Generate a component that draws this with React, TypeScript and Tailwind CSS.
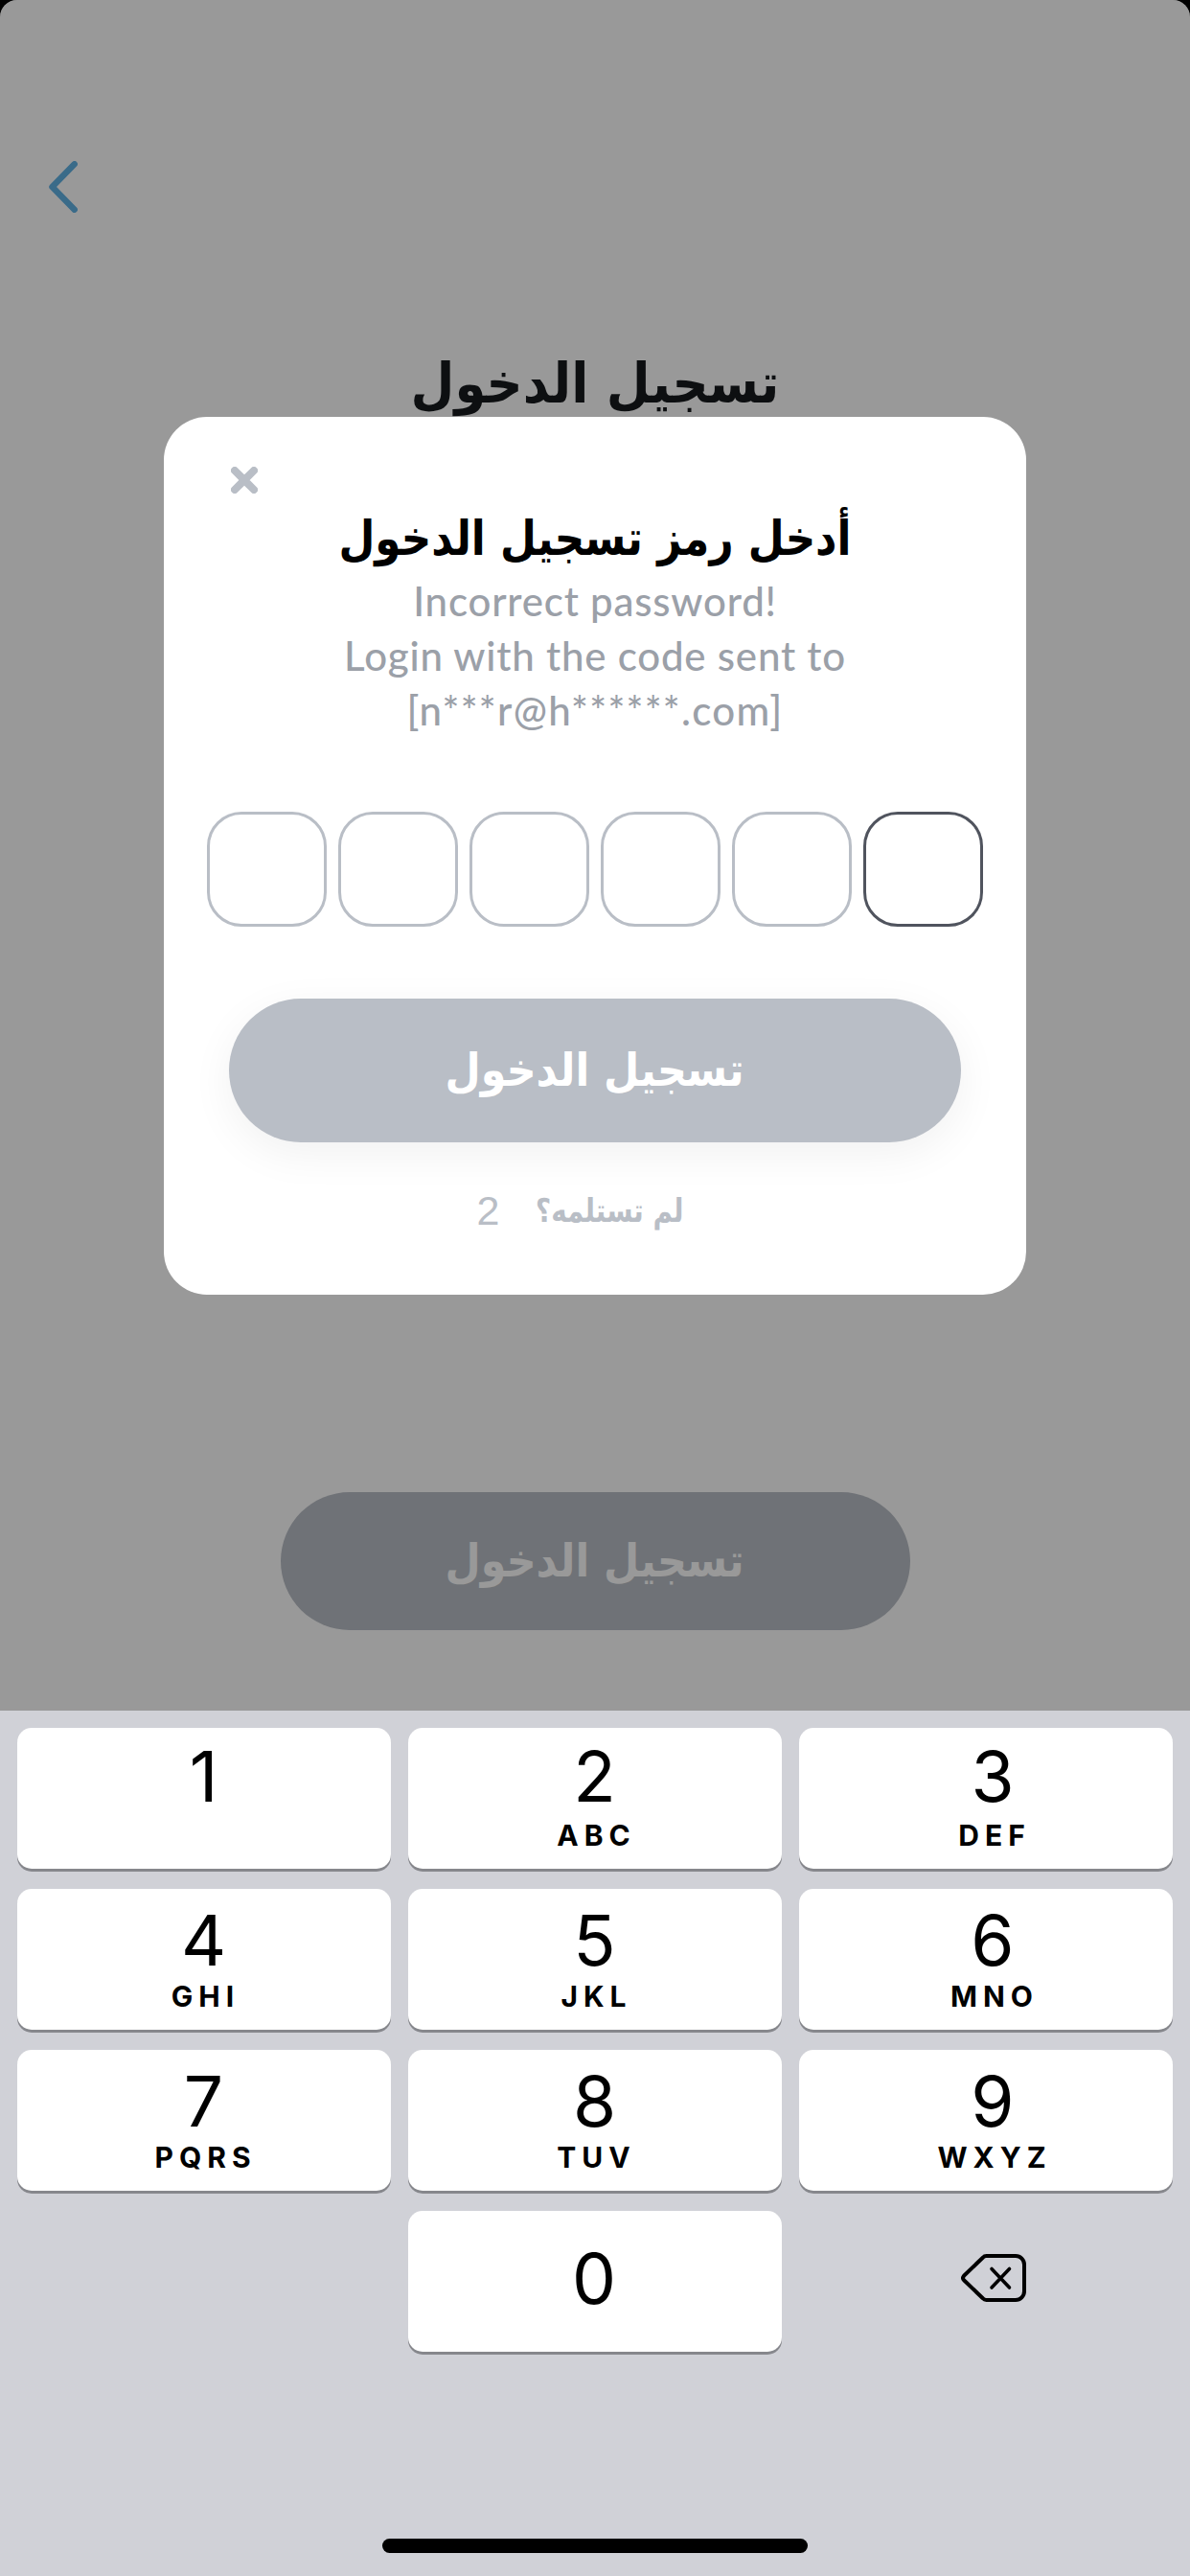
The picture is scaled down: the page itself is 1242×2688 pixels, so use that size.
import React from 'react';

const KEYS = [
  { digit: '1', letters: '' },
  { digit: '2', letters: 'ABC' },
  { digit: '3', letters: 'DEF' },
  { digit: '4', letters: 'GHI' },
  { digit: '5', letters: 'JKL' },
  { digit: '6', letters: 'MNO' },
  { digit: '7', letters: 'PQRS' },
  { digit: '8', letters: 'TUV' },
  { digit: '9', letters: 'WXYZ' },
];

const CODE_LENGTH = 6;

const BackIcon = () => (
  <svg width="30" height="54" viewBox="0 0 30 54" fill="none" stroke="#62b2e4" strokeWidth="6.5" strokeLinecap="round" strokeLinejoin="round">
    <path d="M26.7 3.3 3.5 27l23.2 23.7" />
  </svg>
);

const CloseIcon = () => (
  <svg width="28" height="28" viewBox="0 0 28 28" fill="none" stroke="#b9bec6" strokeWidth="8" strokeLinecap="round">
    <path d="M4 4 24 24M24 4 4 24" />
  </svg>
);

const DeleteIcon = () => (
  <svg width="68" height="50" viewBox="0 0 68 50" fill="none" stroke="#000" strokeWidth="4" strokeLinecap="round" strokeLinejoin="round">
    <path d="M26.5 2H57a9 9 0 0 1 9 9v28a9 9 0 0 1-9 9H26.5a5 5 0 0 1-3.7-1.7L3 27.2a3.3 3.3 0 0 1 0-4.4L22.8 3.7A5 5 0 0 1 26.5 2Z" />
    <path d="M32 15.5 50.5 35M50.5 15.5 32 35" strokeWidth="3.6" />
  </svg>
);

const LoginPage = () => (
  <div className="flex h-full flex-col items-center bg-white">
    <div className="flex w-full pt-[168px] pl-[51px]">
      <BackIcon />
    </div>
    <h1 dir="rtl" className="mt-[138px] h-20 scale-x-[0.912] text-[58px] leading-[80px] font-bold whitespace-nowrap text-[#171a1d]">
      تسجيل الدخول
    </h1>
    <button className="mt-auto mb-[84px] h-36 w-[657px] rounded-full bg-[#b9bec6] pb-0.5 text-[48px] font-bold text-white">
      <span dir="rtl" className="inline-block scale-x-[0.894]">تسجيل الدخول</span>
    </button>
  </div>
);

const CodeModal = () => (
  <div className="flex h-[916px] w-[900px] flex-col rounded-[45px] bg-white px-[45px]">
    <div className="mt-[52px] ml-[25px]">
      <CloseIcon />
    </div>
    <h2 dir="rtl" className="mt-[11px] h-[72px] scale-x-[0.873] text-center text-[50px] leading-[72px] font-bold whitespace-nowrap text-black">
      أدخل رمز تسجيل الدخول
    </h2>
    <p className="mt-px text-center font-[Lato,sans-serif] text-[42px] leading-[57px] font-medium tracking-[0.8px] text-[#9ba0a8]">
      Incorrect password!
      <br />
      Login with the code sent to
      <br />
      <span className="tracking-[1.3px]">[n***r@h******.com]</span>
    </p>

    <div className="mt-[77px] flex gap-3">
      {Array.from({ length: CODE_LENGTH }, (_, i) => (
        <div
          key={i}
          className={`h-[120px] flex-1 rounded-[36px] border-[3px] ${i === CODE_LENGTH - 1 ? 'border-[#50545e]' : 'border-[#b9bec6]'}`}
        />
      ))}
    </div>

    <button className="mt-[75px] h-[150px] w-[764px] self-center rounded-full bg-[#b9bec6] pb-0.5 text-[48px] font-bold text-white shadow-[0_12px_45px_rgba(0,0,0,0.06)]">
      <span dir="rtl" className="inline-block scale-x-[0.894]">تسجيل الدخول</span>
    </button>

    <div dir="rtl" className="mt-[39px] flex h-16 items-center justify-center gap-[38px] pr-[31px] text-[#b9bec6]">
      <div className="w-[154px] text-[34px] font-bold whitespace-nowrap">
        <span className="inline-block origin-right scale-x-[0.815]">لم تستلمه؟</span>
      </div>
      <span className="font-['Liberation_Sans',sans-serif] text-[43px]">2</span>
    </div>
  </div>
);

const Keyboard = () => (
  <div className="flex h-[903px] flex-col bg-[#d0d1d7] px-[18px] pt-[18px] font-[Inter,sans-serif] text-black">
    <div className="grid grid-cols-3 gap-x-[18px] gap-y-[21px]">
      {KEYS.map(({ digit, letters }, i) => (
        <div
          key={digit}
          className={`flex h-[147px] flex-col items-center rounded-[15px] bg-white shadow-[0_3px_0_#86878c] ${i < 3 ? 'pt-[11px]' : 'pt-[14px]'} ${i % 3 === 2 ? 'pl-[18px]' : 'pl-[3px]'}`}
        >
          <span className="h-[80px] pr-1 text-[73px] leading-[80px]">{digit}</span>
          <span className={`h-9 text-[30px] leading-9 font-bold tracking-[6px] ${i < 3 ? 'mt-[3px]' : ''}`}>{letters}</span>
        </div>
      ))}
      <div />
      <div className="flex h-[147px] items-center justify-center rounded-[15px] bg-white pr-0.5 pb-[7px] text-[73px] leading-none shadow-[0_3px_0_#86878c]">
        0
      </div>
      <div className="flex items-center justify-center pb-[7px] pl-4">
        <DeleteIcon />
      </div>
    </div>
    <div className="mt-auto mb-6 h-[15px] w-[444px] self-center rounded-full bg-black" />
  </div>
);

export default function App() {
  return (
    <div className="flex h-[2688px] w-[1242px] flex-col bg-black font-['DejaVu_Sans',sans-serif]">
      <div className="relative flex-1 overflow-hidden rounded-t-[18px]">
        <LoginPage />
        <div className="absolute inset-0 flex items-start justify-center bg-black/40 pt-[435px]">
          <CodeModal />
        </div>
      </div>
      <Keyboard />
    </div>
  );
}
